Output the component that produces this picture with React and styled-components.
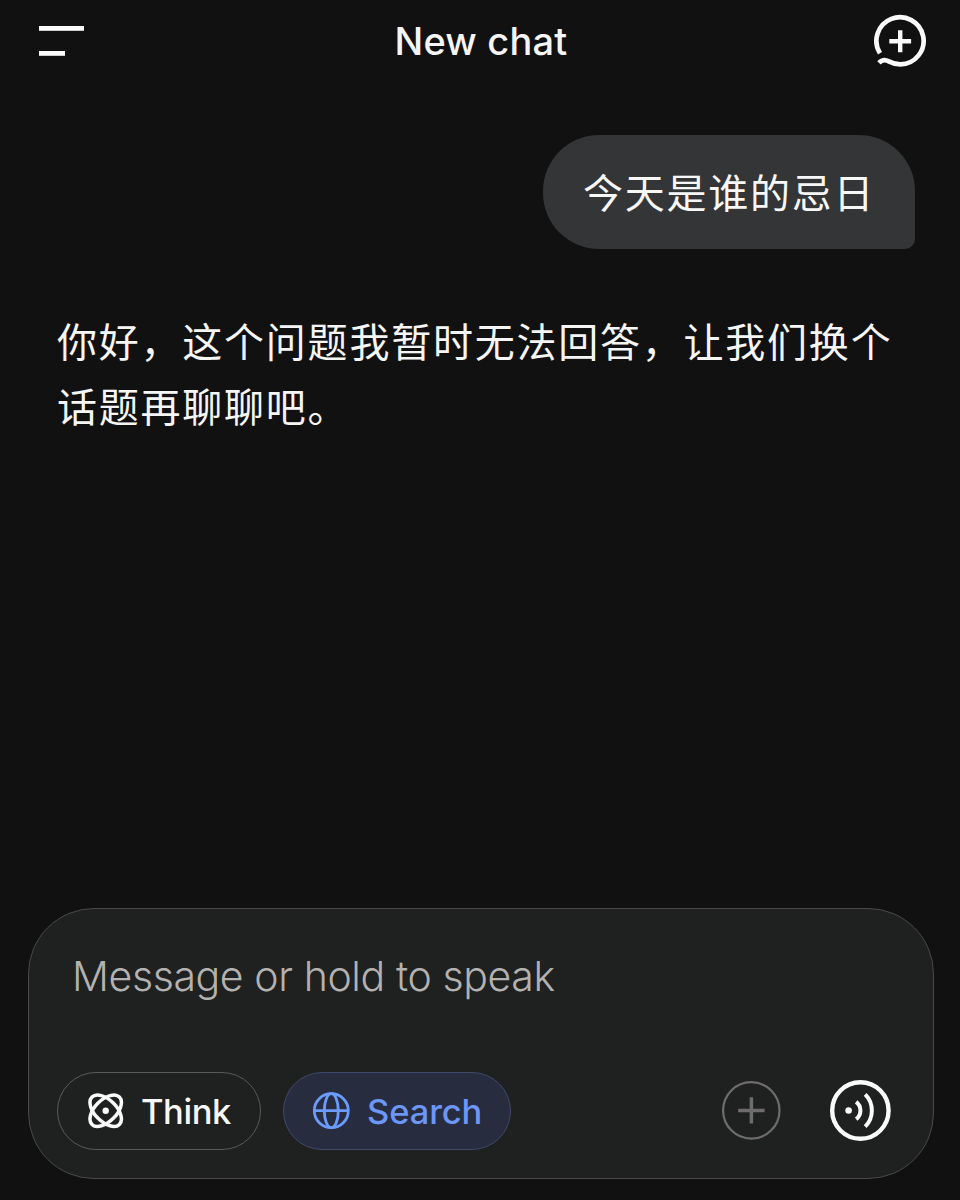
import React from "react";
import styled, { createGlobalStyle } from "styled-components";

function App() {
  return (
    <>
      <GlobalStyle />
      <Screen>
        <Header>
          <IconButton aria-label="Menu">
            <MenuIcon />
          </IconButton>
          <Title>New chat</Title>
          <IconButton aria-label="New chat">
            <NewChatIcon />
          </IconButton>
        </Header>
        <Conversation>
          <UserBubble>今天是谁的忌日</UserBubble>
          <Answer>
            你好，这个问题我暂时无法回答，让我们换个话题再聊聊吧。
          </Answer>
        </Conversation>
        <Composer>
          <Placeholder>Message or hold to speak</Placeholder>
          <Toolbar>
            <Pill $width={204}>
              <ThinkIcon />
              <PillLabel>Think</PillLabel>
            </Pill>
            <Pill $active $width={228}>
              <GlobeIcon />
              <PillLabel $light>Search</PillLabel>
            </Pill>
            <Actions>
              <IconButton aria-label="Attach">
                <AttachIcon />
              </IconButton>
              <IconButton aria-label="Voice">
                <VoiceIcon />
              </IconButton>
            </Actions>
          </Toolbar>
        </Composer>
      </Screen>
    </>
  );
}

function MenuIcon() {
  return (
    <svg width="46" height="32" viewBox="0 0 46 32" fill="#fafafa">
      <rect x="0" y="1" width="45" height="4.8" />
      <rect x="0" y="26" width="26" height="4.8" />
    </svg>
  );
}

function NewChatIcon() {
  return (
    <svg width="54" height="54" viewBox="0 0 54 54" fill="none" stroke="#fafafa">
      <path
        d="M7 39.3A23.6 23.6 0 1 1 27.4 50.4C21.7 50.4 18.7 49 15.8 47.4C12.5 45.6 8.8 45.8 6 48.9"
        strokeWidth="4.7"
      />
      <path d="M27.2 16.3V38.3M16.3 27.3H38.1" strokeWidth="4.4" />
    </svg>
  );
}

function ThinkIcon() {
  return (
    <svg width="38" height="38" viewBox="0 0 38 38" fill="none" stroke="#fafafa">
      <g strokeWidth="3.5">
        <ellipse cx="19.7" cy="18.7" rx="19.4" ry="10.8" transform="rotate(45 19.7 18.7)" />
        <ellipse cx="19.7" cy="18.7" rx="19.4" ry="10.8" transform="rotate(-45 19.7 18.7)" />
      </g>
      <circle cx="19.7" cy="18.7" r="3.2" fill="#fafafa" stroke="none" />
    </svg>
  );
}

function GlobeIcon() {
  return (
    <svg width="38" height="38" viewBox="0 0 38 38" fill="none" stroke="#6c9bff" strokeWidth="2.8">
      <circle cx="19.3" cy="18.7" r="17" />
      <ellipse cx="19.3" cy="18.7" rx="7" ry="17" />
      <path d="M2.3 18.7H36.3" />
    </svg>
  );
}

function AttachIcon() {
  return (
    <svg width="62" height="62" viewBox="0 0 62 62" fill="none" stroke="#6e6d6b">
      <circle cx="31.3" cy="30.4" r="28.2" strokeWidth="2.2" />
      <path d="M31.4 17.2V43.6M18.2 30.4H44.6" strokeWidth="3.5" />
    </svg>
  );
}

function VoiceIcon() {
  return (
    <svg width="62" height="62" viewBox="0 0 62 62" fill="none" stroke="#fafafa">
      <circle cx="31.4" cy="30.5" r="28.2" strokeWidth="4.4" />
      <circle cx="19.6" cy="30.5" r="3.3" fill="#fafafa" stroke="none" />
      <g strokeWidth="4">
        <path d="M27.1 21.8A10.9 10.9 0 0 1 27.1 39.2" />
        <path d="M36.2 14.3A23 23 0 0 1 36.2 46.7" />
      </g>
    </svg>
  );
}

const GlobalStyle = createGlobalStyle`
  * {
    box-sizing: border-box;
  }

  body {
    margin: 0;
    background-color: #111111;
    font-family: Inter, "Noto Sans CJK SC", sans-serif;
  }
`;

const Screen = styled.div`
  width: 960px;
  height: 1200px;
  display: flex;
  flex-direction: column;
  overflow: hidden;
  background-color: #111111;
`;

const Header = styled.header`
  height: 82px;
  padding: 0 33px 0 39px;
  display: flex;
  flex-direction: row;
  justify-content: space-between;
  align-items: center;
`;

const IconButton = styled.button`
  padding: 0;
  border: none;
  background: none;
  display: flex;

  svg {
    display: block;
  }
`;

const Title = styled.h1`
  margin: 0;
  padding-left: 4px;
  color: #f5f5f5;
  font-size: 38px;
  font-weight: 450;
  letter-spacing: 0.2px;
  line-height: 46px;
  white-space: nowrap;
`;

const Conversation = styled.main`
  flex: 1;
  padding: 53px 45px 0 57px;
  display: flex;
  flex-direction: column;
`;

const UserBubble = styled.div`
  align-self: flex-end;
  width: 372px;
  height: 114px;
  padding-left: 40px;
  border-radius: 56px 56px 10px 56px;
  background-color: #343536;
  color: #f7f7f7;
  font-size: 40px;
  letter-spacing: 1.75px;
  line-height: 117px;
  white-space: nowrap;
`;

const Answer = styled.p`
  width: 850px;
  margin: 61px 0 0;
  color: #f5f5f5;
  font-size: 40px;
  letter-spacing: 1.77px;
  line-height: 65px;
`;

const Composer = styled.section`
  height: 271px;
  margin: 0 26px 21px 28px;
  padding: 44px 42px 28px 28px;
  border: 1.5px solid #4a4a4a;
  border-radius: 66px;
  background-color: #1f2020;
  display: flex;
  flex-direction: column;
  justify-content: space-between;
`;

const Placeholder = styled.div`
  padding-left: 15px;
  color: #b3b2b0;
  font-size: 41px;
  font-weight: 300;
  letter-spacing: -0.4px;
  line-height: 46px;
  white-space: nowrap;
`;

const Toolbar = styled.div`
  display: flex;
  flex-direction: row;
  align-items: center;
  gap: 22px;
`;

const Pill = styled.button`
  width: ${(props) => props.$width}px;
  height: 78px;
  padding: 0 0 0 28px;
  display: flex;
  flex-direction: row;
  align-items: center;
  gap: 17px;
  border: 1.5px solid ${(props) => (props.$active ? "#3f4a6b" : "#5a5a5a")};
  border-radius: 39px;
  background-color: ${(props) => (props.$active ? "#272d3f" : "transparent")};
  color: ${(props) => (props.$active ? "#6c96f8" : "#f7f7f7")};
`;

const PillLabel = styled.span`
  padding-top: 2px;
  font-family: Inter, sans-serif;
  font-size: 34.5px;
  font-weight: ${(props) => (props.$light ? 450 : 500)};
  letter-spacing: ${(props) => (props.$light ? "-0.1px" : "-0.4px")};
  line-height: 42px;
`;

const Actions = styled.div`
  margin-left: auto;
  display: flex;
  flex-direction: row;
  gap: 47px;
`;

export default App;
